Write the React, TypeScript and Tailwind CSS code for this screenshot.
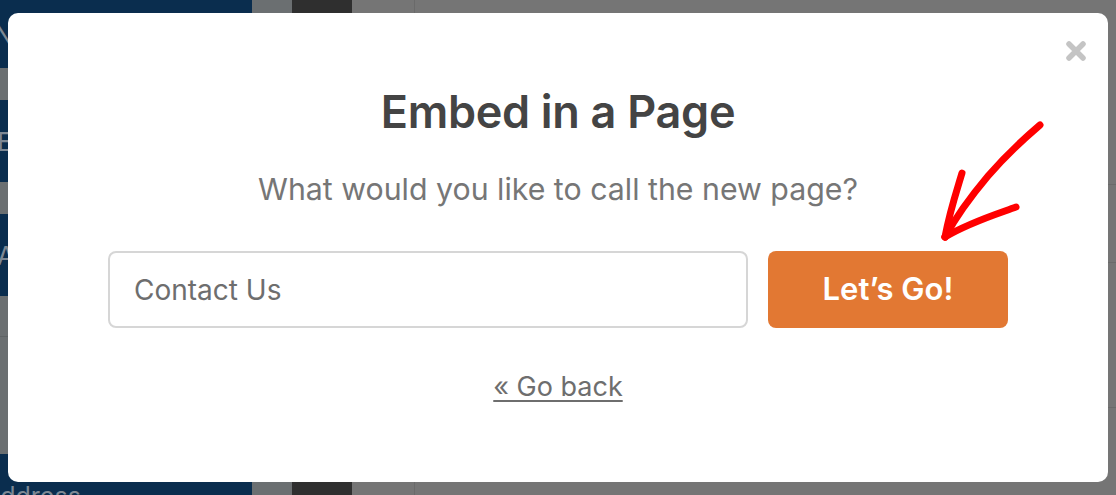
import React from "react";

export default function App() {
  const navy = "bg-[#0a2d4e]";
  return (
    <div className="relative w-[1116px] h-[495px] overflow-hidden font-[Inter,sans-serif]">
      {/* dimmed page underneath */}
      <div className="flex h-full w-full">
        <div className="flex w-[252px] flex-col overflow-hidden">
          <div className={`${navy} h-[68px] shrink-0 flex items-center text-[26px] text-[#7d8894] -indent-[6px]`}>Name</div>
          <div className="h-[32px] shrink-0 bg-[#6b6f71]" />
          <div className={`${navy} h-[82px] shrink-0 flex items-center text-[26px] text-[#7d8894] -indent-[3px]`}>Email</div>
          <div className="h-[32px] shrink-0 bg-[#6b6f71]" />
          <div className={`${navy} h-[82px] shrink-0 flex items-center text-[26px] text-[#7d8894] -indent-[3px]`}>Address</div>
          <div className="h-[41px] shrink-0 bg-[#6b6f71] border-b border-[#5f6365]" />
          <div className="h-[117px] shrink-0 bg-[#6b6f71]" />
          <div className={`${navy} h-[41px] shrink-0 overflow-hidden pt-[30px] text-[25px] leading-[25px] text-[#7d8894] -indent-[17px] whitespace-nowrap`}>Address</div>
        </div>
        <div className="w-[40px] bg-[#6b6f71]" />
        <div className="w-[60px] bg-[#2f2f2f]" />
        <div className="flex flex-1 bg-[#757575]">
          <div className="w-[63px] border-r border-[#6a6a6a]" />
          <div className="flex flex-1 flex-col">
            <div className="h-[185px] border-b border-[#6a6a6a]" />
            <div className="h-[78px] border-b border-[#6a6a6a]" />
            <div className="h-[145px] border-b border-[#6a6a6a]" />
          </div>
        </div>
      </div>

      {/* modal */}
      <div className="absolute left-[8px] top-[13px] flex h-[469px] w-[1100px] flex-col items-center rounded-[10px] bg-white pt-[76px]">
        <h1 className="text-[45px] leading-[45px] font-semibold text-[#444444] tracking-[-0.3px]">Embed in a Page</h1>
        <p className="mt-[40px] text-[30.3px] leading-[31px] text-[#767676]">What would you like to call the new page?</p>
        <div className="mt-[46px] flex gap-[20px]">
          <input
            className="h-[77px] w-[640px] rounded-[8px] border-2 border-[#d6d6d6] pl-[24px] text-[28px] text-[#6e6e6e] placeholder:text-[#6e6e6e] outline-none"
            placeholder="Contact Us"
          />
          <button className="h-[77px] w-[240px] rounded-[8px] bg-[#e27833] text-[31px] font-semibold text-white">Let’s Go!</button>
        </div>
        <a className="mt-[45px] text-[27px] leading-[27px] text-[#6e6e6e] underline decoration-[1.5px] underline-offset-[4px]">« Go back</a>

        <button className="absolute right-[21px] top-[27px] h-[22px] w-[22px]">
          <svg viewBox="0 0 22 22" width="22" height="22">
            <path d="M4 4 L18 18 M18 4 L4 18" stroke="#c4c4c4" strokeWidth="5.5" strokeLinecap="round" />
          </svg>
        </button>
      </div>

      {/* red hand-drawn arrow annotation */}
      <svg className="absolute left-[930px] top-[110px]" width="130" height="140" viewBox="0 0 130 140" fill="none">
        <path d="M110 15 C90 32 72 50 58 66 C42 85 27 105 15 127" stroke="#ff0000" strokeWidth="7" strokeLinecap="round" />
        <path d="M32 63 C27 80 20 100 15 127" stroke="#ff0000" strokeWidth="7" strokeLinecap="round" />
        <path d="M86 97 C70 103 40 112 15 127" stroke="#ff0000" strokeWidth="7" strokeLinecap="round" />
      </svg>
    </div>
  );
}
